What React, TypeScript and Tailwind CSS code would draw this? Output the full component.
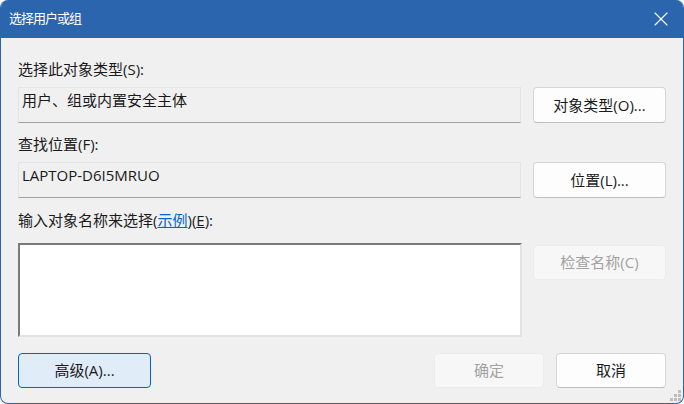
import { X } from "lucide-react";

const font = { fontFamily: '"Open Sans", "Noto Sans CJK SC", sans-serif' };

function ReadOnlyField({ value }: { value: string }) {
  return (
    <div className="flex-1 h-9 bg-[#f0f0f0] border border-[#e4e4e4] border-b-[#a0a0a0] px-[3px] pt-[2px] text-[15px] leading-5 text-[#1a1a1a]">
      {value}
    </div>
  );
}

function Btn({
  children,
  variant = "normal",
  className = "",
}: {
  children: React.ReactNode;
  variant?: "normal" | "disabled" | "focus";
  className?: string;
}) {
  const styles = {
    normal: "bg-[#fdfdfd] border-[#d5d5d5] border-b-[#bdbdbd] text-[#1a1a1a]",
    disabled: "bg-[#f7f7f7] border-[#ececec] text-[#a2a2a2]",
    focus: "bg-[#e0ecf8] border-[#0067c0] text-[#1a1a1a]",
  }[variant];
  return (
    <button
      className={`flex items-center justify-center rounded-[4px] border text-[15px] ${styles} ${className}`}
    >
      {children}
    </button>
  );
}

export default function App() {
  return (
    <div className="w-[684px] h-[404px] bg-white" style={font}>
      <div className="relative w-full h-full flex flex-col rounded-[8px] border border-[#2b65ad] border-t-0 overflow-hidden bg-[#f0f0f0]">
        {/* Title bar */}
        <div className="h-[38px] shrink-0 bg-[#2b65ad] flex items-center justify-between pl-[8px] pr-[10px]">
          <span className="text-white text-[13px] tracking-[-1px]">选择用户或组</span>
          <X className="w-6 h-6 text-white" strokeWidth={1.1} />
        </div>

        {/* Body */}
        <div className="flex-1 flex flex-col px-[17px] pt-[21px]">
          <div className="h-5 text-[15px] leading-5 text-[#1a1a1a]">选择此对象类型(S):</div>
          <div className="mt-2 flex gap-3">
            <ReadOnlyField value="用户、组或内置安全主体" />
            <Btn className="w-[133px] h-9">对象类型(O)...</Btn>
          </div>

          <div className="mt-[11px] h-5 text-[15px] leading-5 text-[#1a1a1a]">查找位置(F):</div>
          <div className="mt-2 flex gap-3">
            <ReadOnlyField value="LAPTOP-D6I5MRUO" />
            <Btn className="w-[133px] h-9">位置(L)...</Btn>
          </div>

          <div className="mt-3 h-5 text-[15px] leading-5 text-[#1a1a1a]">
            输入对象名称来选择(<span className="text-[#0066cc] underline">示例</span>)(<span className="underline">E</span>):
          </div>
          <div className="mt-[13px] flex gap-[11px]">
            <div className="flex-1 h-[94px] bg-white border-2 border-t-[#7a7a7a] border-l-[#7a7a7a] border-r-[#e3e3e3] border-b-[#e3e3e3]" />
            <Btn variant="disabled" className="w-[133px] h-[35px] mt-0.5">检查名称(C)</Btn>
          </div>

          <div className="mt-4 flex items-center">
            <Btn variant="focus" className="w-[133px] h-[35px]">高级(A)...</Btn>
            <div className="flex-1" />
            <Btn variant="disabled" className="w-[110px] h-[35px]">确定</Btn>
            <Btn className="w-[110px] h-[35px] ml-3">取消</Btn>
          </div>
        </div>

        {/* Resize grip */}
        <svg className="absolute right-[2px] bottom-[2px]" width="12" height="12" viewBox="0 0 12 12">
          {[
            [8, 0],
            [4, 4],
            [8, 4],
            [0, 8],
            [4, 8],
            [8, 8],
          ].map(([x, y]) => (
            <rect key={`${x}-${y}`} x={x + 1} y={y + 1} width="3" height="3" fill="#bdbdbd" />
          ))}
        </svg>
      </div>
    </div>
  );
}
